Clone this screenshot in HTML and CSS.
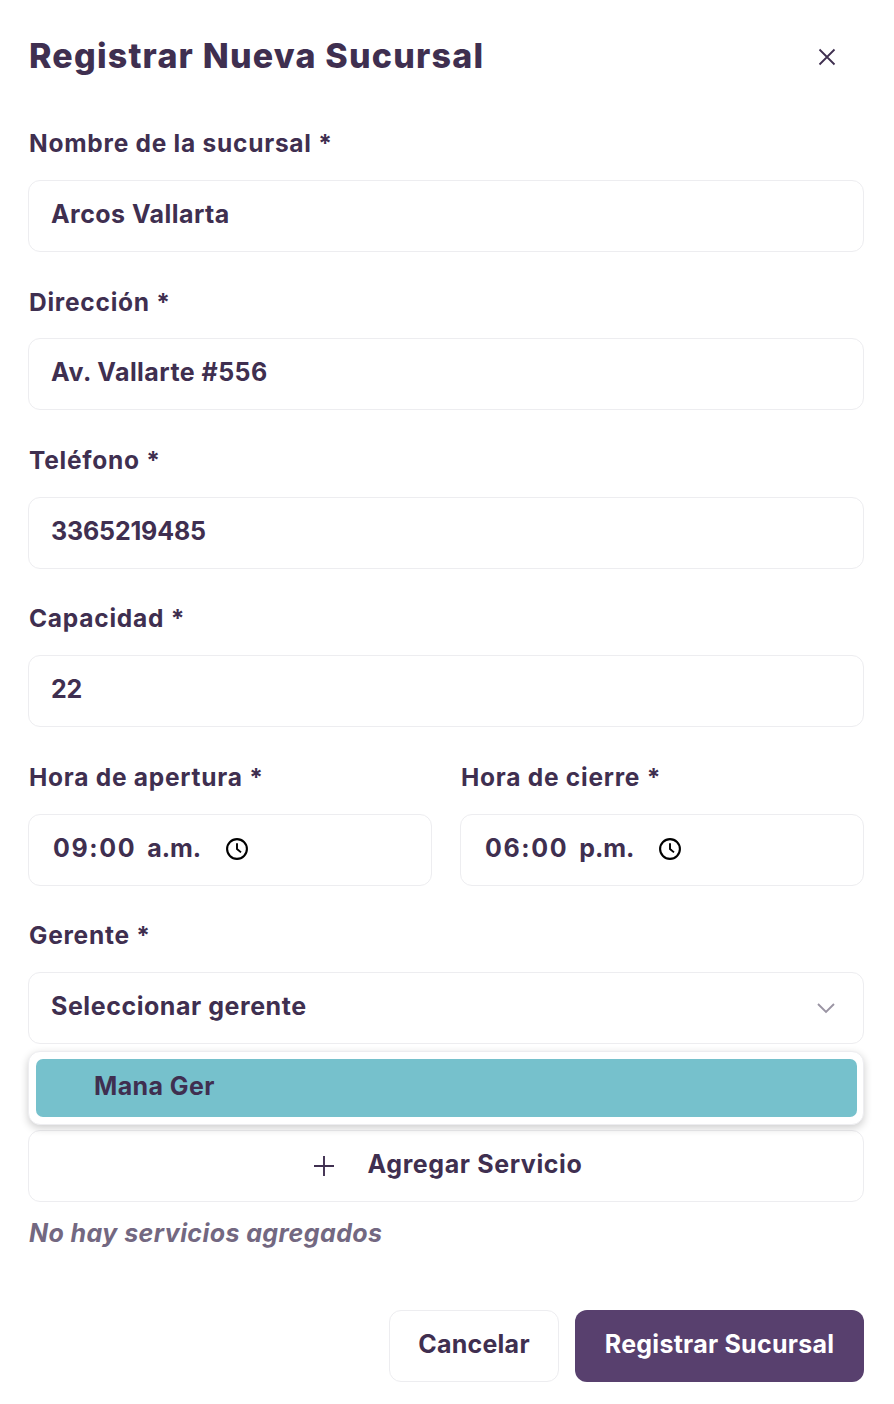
FILE: index.html
```html
<!DOCTYPE html>
<html lang="es">
<head>
<meta charset="utf-8">
<title>Registrar Nueva Sucursal</title>
<link rel="stylesheet" href="styles.css">
</head>
<body>
<main class="modal">
  <header class="head">
    <h1>Registrar Nueva Sucursal</h1>
    <button class="close" aria-label="Cerrar">
      <svg width="18" height="18" viewBox="0 0 18 18"><path d="M1.5 1.5l15 15M16.5 1.5l-15 15" fill="none" stroke="#3f2f50" stroke-width="1.8"/></svg>
    </button>
  </header>
  <div class="field"><label>Nombre de la sucursal *</label><div class="input">Arcos Vallarta</div></div>
  <div class="field"><label>Dirección *</label><div class="input">Av. Vallarte #556</div></div>
  <div class="field"><label>Teléfono *</label><div class="input digits">3365219485</div></div>
  <div class="field"><label>Capacidad *</label><div class="input digits">22</div></div>
  <div class="times">
    <div class="field"><label>Hora de apertura *</label><div class="input time"><span class="t">09:00</span><span class="t ap">a.m.</span>
      <svg class="clock" width="24" height="24" viewBox="0 0 24 24"><circle cx="12" cy="12" r="9.9" fill="none" stroke="#000" stroke-width="2.1"/><path d="M12 6.2V12l4 3.4" fill="none" stroke="#000" stroke-width="1.9"/></svg></div></div>
    <div class="field"><label>Hora de cierre *</label><div class="input time"><span class="t">06:00</span><span class="t ap">p.m.</span>
      <svg class="clock" width="24" height="24" viewBox="0 0 24 24"><circle cx="12" cy="12" r="9.9" fill="none" stroke="#000" stroke-width="2.1"/><path d="M12 6.2V12l4 3.4" fill="none" stroke="#000" stroke-width="1.9"/></svg></div></div>
  </div>
  <div class="field manager"><label>Gerente *</label>
    <div class="input select">Seleccionar gerente
      <svg width="20" height="12" viewBox="0 0 20 12"><path d="M2 2l8 8 8-8" fill="none" stroke="#9a94a3" stroke-width="1.9"/></svg>
      <div class="menu"><div class="option">Mana Ger</div></div>
    </div>
  </div>
  <button class="add">
    <svg width="20" height="20" viewBox="0 0 20 20"><path d="M10 0v20M0 10h20" fill="none" stroke="#3f2f50" stroke-width="1.9"/></svg>
    <span>Agregar Servicio</span>
  </button>
  <p class="empty">No hay servicios agregados</p>
  <footer class="actions">
    <button class="btn cancel">Cancelar</button>
    <button class="btn submit">Registrar Sucursal</button>
  </footer>
</main>
</body>
</html>
```
FILE: styles.css
```css
* { box-sizing: border-box; }
html, body { margin: 0; background: #fff; }
body { font-family: Inter, "Noto Sans", "Liberation Sans", sans-serif; color: #3f2f50; }
.modal { width: 894px; height: 1404px; padding: 0 30px 0 28px; overflow: hidden; }
.head { height: 128.3px; display: flex; justify-content: space-between; align-items: flex-start; padding-top: 33px; }
.head h1 { margin: 0 0 0 1px; font-size: 34px; line-height: 46px; font-weight: 800; letter-spacing: 1.2px; }
.close { border: 0; background: none; padding: 0; margin: 15px 28px 0 0; height: 18px; display: block; }
.close svg { display: block; }
.field { margin-bottom: 34.7px; }
.field label { display: block; height: 28px; margin: 0 0 23.7px 1px; font-size: 24.5px; line-height: 30px; font-weight: 700; letter-spacing: .75px; }
.input { height: 72px; border: 1px solid #ededf0; border-radius: 12px; padding: 0 22px 4px; font-size: 25px; font-weight: 700; letter-spacing: .45px; display: flex; align-items: center; background: #fff; }
.digits { letter-spacing: -.15px; }
.times { display: grid; grid-template-columns: 404px 404px; column-gap: 28px; }
.times .field { margin-bottom: 34.3px; }
.times .field label { margin-bottom: 24.1px; }
.time { padding-left: 24px; }
.t { letter-spacing: 1.6px; }
.ap { margin-left: 11px; letter-spacing: 0; }
.clock { margin: 2px 0 0 24px; }
.select { position: relative; justify-content: space-between; padding-right: 27px; letter-spacing: .55px; }
.manager { margin-bottom: 14px; position: relative; }
.select svg { margin-top: 4px; }
.menu { position: absolute; left: -1px; right: -1px; top: 78px; height: 74px; padding: 7px 6px 7px 7px; background: #fff; border: 1px solid #ededf0; border-radius: 12px; box-shadow: 0 3px 9px rgba(0,0,0,.2); z-index: 2; letter-spacing: .4px; }
.option { height: 58px; background: #76c1cc; border-radius: 7px; padding: 0 0 4px 58px; display: flex; align-items: center; }
.add { display: flex; justify-content: center; align-items: center; gap: 34px; width: 100%; height: 72px; margin-top: 86px; background: #fff; border: 1px solid #ededf0; border-radius: 12px; color: inherit; font: 700 25px Inter, "Noto Sans", sans-serif; letter-spacing: .6px; padding: 0 0 4px 4px; }
.add svg { margin-top: 4px; }
.empty { margin: 16px 0 0 1px; height: 30px; font-size: 25px; line-height: 30px; font-style: italic; font-weight: 700; letter-spacing: .42px; color: #736881; }
.actions { display: flex; justify-content: flex-end; gap: 16px; margin-top: 62px; }
.btn { height: 72px; border-radius: 12px; font: 700 25px Inter, "Noto Sans", sans-serif; letter-spacing: .25px; padding: 0 0 4px; }
.cancel { width: 170px; background: #fff; border: 1px solid #ededf0; color: inherit; }
.submit { width: 289px; background: #58406e; border: 0; color: #fff; }
```
